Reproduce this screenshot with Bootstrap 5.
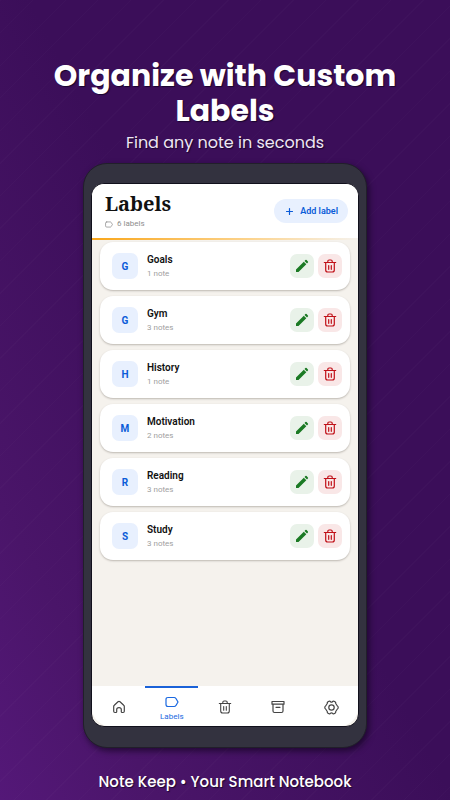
<!DOCTYPE html>
<html lang="en">
<head>
<meta charset="utf-8">
<meta name="viewport" content="width=device-width, initial-scale=1">
<title>Note Keep – Labels</title>
<link href="https://cdn.jsdelivr.net/npm/bootstrap@5.3.0/dist/css/bootstrap.min.css" rel="stylesheet">
<style>
body{font-family:Roboto,"Liberation Sans",sans-serif;background:repeating-linear-gradient(135deg,rgba(255,255,255,.014) 0 1px,transparent 1px 23px),linear-gradient(62deg,#541878 0%,#4a1569 18%,#3b0e59 52%,#3b0e59 100%);color:#111}
.promo{font-family:Poppins,Inter,sans-serif;color:#fff;text-shadow:1px 1px 1px rgba(10,0,25,.7)}
.promo-top{padding-top:58px}
.promo-title{font-size:30px;line-height:35px;font-weight:700}
.promo-sub{font-size:16px;line-height:26px;font-weight:400;color:#eee6f3;margin-top:2px}
.promo-foot{font-size:15px;line-height:24px;font-weight:500;margin-top:22px;padding-bottom:6px}
.stage{padding:0 83px;margin-top:7px}
.phone{background:#33323f;border:1px solid #211f2a;border-radius:24px;padding:19px 7px 20px;box-shadow:2px 3px 6px rgba(10,0,20,.6)}
.screen{background:#f5f2ed;border:1px solid #11101c;border-radius:13px;overflow:hidden}
.top-bar{background:#fff;padding:8px 10px 8px 13px}
.top-title{font-family:"Noto Serif","Liberation Serif",serif;font-size:20px;line-height:24px;font-weight:700}
.top-count{font-size:8px;line-height:12px;color:#8e8e8e;gap:4px;margin-top:2px}
.accent{height:2px;background:linear-gradient(90deg,#f9a61a,#fcd48f 60%,#f5f2ed)}
.add-btn{background:#e8f0fe;color:#0b5cd8;border-radius:12px;height:24px;padding:0 10px 0 11px;font-size:9px;line-height:12px;font-weight:600;gap:6px}
.labels{padding:2px 8px;gap:6px}
.label-card{background:#fff;border-radius:13px;height:48px;padding:0 8px 0 12px;box-shadow:0 1px 2px rgba(60,50,40,.3)}
.initial{width:26px;height:26px;border-radius:7px;background:#e8f0fe;color:#0b5cd8;font-size:10px;font-weight:700}
.label-text{margin-left:9px}
.label-name{font-size:10px;line-height:14px;font-weight:600}
.label-notes{font-size:8px;line-height:13px;color:#a0a0a0}
.act{width:24px;height:24px;border-radius:7px}
.act-edit{background:#e9f2e9;color:#1b7a24}
.act-del{background:#f9e7e7;color:#c01018}
.tabs{background:#fff;height:40px;border-radius:0 0 18px 18px}
.tab{flex:1 1 0;color:#444;text-decoration:none;font-size:8px;line-height:10px;border-top:2px solid transparent}
.tab.on{color:#1a68e0;border-color:#1a62d8}
svg{display:block;fill:none;stroke:currentColor;stroke-linecap:round;stroke-linejoin:round}
</style>
</head>
<body>
<svg width="0" height="0" class="position-absolute" aria-hidden="true">
<symbol id="tag" viewBox="0 0 14 12"><path d="M3 1.500h6.200q1 0 1.600.8L13 6l-2.200 3.700q-.6.8-1.600.8H3q-2 0-2-2v-5q0-2 2-2z"/></symbol>
<symbol id="bin" viewBox="0 0 14 14"><path d="M1.300 3.500h11.400M4.800 3.300v-1q0-1.300 1.300-1.300h1.800q1.300 0 1.300 1.300v1M2.700 3.700v7.300q0 2 2 2h4.600q2 0 2-2V3.700M5.700 6.500v3.800M8.300 6.500v3.800"/></symbol>
<symbol id="pen" viewBox="0 0 14 14"><path fill="currentColor" stroke="none" d="M1 13v-2.500L8.800 2.700l2.500 2.500L3.500 13zM9.500 2l.9-.9q.6-.6 1.200 0l1.300 1.300q.6.600 0 1.200l-.9.9z"/></symbol>
</svg>
<main class="min-vh-100 d-flex flex-column">
<header class="promo promo-top text-center px-5">
<h1 class="promo-title mb-0">Organize with Custom Labels</h1>
<p class="promo-sub mb-0">Find any note in seconds</p>
</header>
<div class="stage flex-grow-1 d-flex flex-column">
<section class="phone flex-grow-1 d-flex flex-column">
<div class="screen flex-grow-1 d-flex flex-column">
<div class="top-bar d-flex align-items-center justify-content-between">
<div>
<h2 class="top-title mb-0">Labels</h2>
<div class="top-count d-flex align-items-center"><svg width="8" height="7" stroke-width="1.300"><use href="#tag"/></svg>6 labels</div>
</div>
<button type="button" class="add-btn border-0 d-flex align-items-center"><svg width="9" height="9" viewBox="0 0 9 9" stroke-width="1.200"><path d="M4.500 1.500v6M1.500 4.500h6"/></svg>Add label</button>
</div>
<div class="accent"></div>
<ul class="labels list-unstyled mb-0 flex-grow-1 d-flex flex-column" id="labels"></ul>
<nav class="tabs d-flex" aria-label="Main">
<a href="#home" aria-label="Home" class="tab d-flex flex-column align-items-center justify-content-center"><svg width="14" height="14" viewBox="0 0 14 14" stroke-width="1.200"><path d="M1.700 6.500q0-.8.600-1.300l3.700-3.400q1-.8 2 0l3.700 3.400q.6.500.6 1.300v4.800q0 1.200-1.200 1.200h-1q-.8 0-.8-.8V9.600q0-2-2.300-2t-2.300 2v2.100q0 .8-.8.8h-1q-1.200 0-1.200-1.200z"/></svg></a>
<a href="#labels" class="tab on pt-1 d-flex flex-column align-items-center justify-content-center" aria-current="page"><svg class="mb-1" width="14" height="12" stroke-width="1.200"><use href="#tag"/></svg>Labels</a>
<a href="#trash" aria-label="Trash" class="tab d-flex flex-column align-items-center justify-content-center"><svg width="14" height="14" stroke-width="1.100"><use href="#bin"/></svg></a>
<a href="#archive" aria-label="Archive" class="tab d-flex flex-column align-items-center justify-content-center"><svg width="14" height="14" viewBox="0 0 14 14" stroke-width="1.200"><path d="M1 1.500h12v2.700H1zM2 4.200v6.800q0 1.500 1.500 1.500h7q1.500 0 1.500-1.500V4.200M5 7.300h4"/></svg></a>
<a href="#settings" aria-label="Settings" class="tab d-flex flex-column align-items-center justify-content-center"><svg width="15" height="15" viewBox="0 0 15 15" stroke-width="1.200"><path d="M5 1.200q1-.4 1.500.5 1 .8 2 0 .5-.9 1.500-.5l1.300.8q.7.700.4 1.500l1.700 2.500q.8.300.8 1.500t-.8 1.500l-1.700 2.500q.3.800-.4 1.500l-1.300.8q-1 .4-1.500-.5-1-.8-2 0-.5.900-1.500.5l-1.300-.8q-.7-.7-.4-1.500L1.600 9Q.8 8.700.8 7.500T1.600 6l1.700-2.500Q3 2.700 3.700 2z"/><circle cx="7.500" cy="7.500" r="2.700"/></svg></a>
</nav>
</div>
</section>
</div>
<footer class="promo promo-foot text-center">Note Keep • Your Smart Notebook</footer>
</main>
<script>
const labels = [["Goals", 1], ["Gym", 3], ["History", 1], ["Motivation", 2], ["Reading", 3], ["Study", 3]];
document.getElementById("labels").innerHTML = labels.map(([name, n]) => `
<li class="label-card d-flex align-items-center">
<span class="initial d-flex align-items-center justify-content-center">${name[0]}</span>
<div class="label-text flex-grow-1"><div class="label-name">${name}</div><div class="label-notes">${n} note${n > 1 ? "s" : ""}</div></div>
<div class="d-flex gap-1"><button type="button" class="act act-edit border-0 p-0 d-flex align-items-center justify-content-center" aria-label="Edit ${name}"><svg width="14" height="14"><use href="#pen"/></svg></button>
<button type="button" class="act act-del border-0 p-0 d-flex align-items-center justify-content-center" aria-label="Delete ${name}"><svg width="14" height="14" stroke-width="1.200"><use href="#bin"/></svg></button></div>
</li>`).join("");
</script>
<script src="https://cdn.jsdelivr.net/npm/bootstrap@5.3.0/dist/js/bootstrap.bundle.min.js"></script>
</body>
</html>
